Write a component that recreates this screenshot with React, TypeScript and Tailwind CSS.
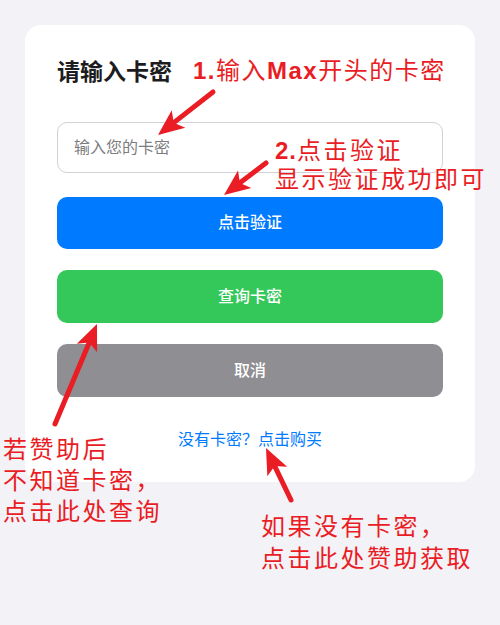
import React from "react";

const uiFont = { fontFamily: '"Liberation Sans", "Noto Sans CJK SC", sans-serif' };

function Arrow({ x1, y1, x2, y2 }: { x1: number; y1: number; x2: number; y2: number }) {
  const dx = x2 - x1;
  const dy = y2 - y1;
  const len = Math.hypot(dx, dy);
  const ux = dx / len;
  const uy = dy / len;
  const headLen = 26;
  const headW = 11;
  const bx = x2 - ux * headLen;
  const by = y2 - uy * headLen;
  const pts = [
    [x2, y2],
    [bx - uy * headW, by + ux * headW],
    [x2 - ux * (headLen - 6), y2 - uy * (headLen - 6)],
    [bx + uy * headW, by - ux * headW],
  ]
    .map((p) => p.join(","))
    .join(" ");
  return (
    <g>
      <line
        x1={x1}
        y1={y1}
        x2={x2 - ux * 14}
        y2={y2 - uy * 14}
        stroke="#ea1c24"
        strokeWidth={5}
        strokeLinecap="round"
      />
      <polygon points={pts} fill="#ea1c24" />
    </g>
  );
}

export default function App() {
  return (
    <div className="relative min-h-[625px] bg-[#f2f2f7] p-[25px]" style={uiFont}>
      <div className="rounded-2xl bg-white px-8 pt-8 pb-[30px]">
        <h1 className="text-[23px] leading-[30px] font-bold text-[#1c1c1e]">请输入卡密</h1>

        <input
          className="mt-[35px] block h-[51px] w-full rounded-[10px] border border-[#d1d1d6] px-4 text-base outline-none placeholder:text-[#7c7c80]"
          placeholder="输入您的卡密"
        />

        <div className="mt-6 flex flex-col gap-[21px]">
          <button className="h-[52px] rounded-[10px] bg-[#007aff] text-base font-medium text-white">
            点击验证
          </button>
          <button className="h-[53px] rounded-[10px] bg-[#34c759] text-base font-medium text-white">
            查询卡密
          </button>
          <button className="h-[53px] rounded-[10px] bg-[#8e8e93] text-base font-medium text-white">
            取消
          </button>
        </div>

        <p className="mt-[31px] text-center text-base leading-6 text-[#007aff]">没有卡密？点击购买</p>
      </div>

      {/* annotations */}
      <div className="pointer-events-none absolute inset-0 text-[24px] text-[#ea1c24]">
        <div className="absolute left-[193px] top-[56px] leading-[30px] tracking-[1.5px] whitespace-nowrap">
          <b>1.</b>输入<b>Max</b>开头的卡密
        </div>
        <div className="absolute left-[275px] top-[136px] leading-[29px] tracking-[2.5px] whitespace-nowrap">
          <b className="tracking-[1px]">2.</b>点击验证
          <br />
          显示验证成功即可
        </div>
        <div className="absolute left-[3px] top-[434px] leading-[31px] tracking-[2.5px] whitespace-nowrap">
          若赞助后
          <br />
          不知道卡密，
          <br />
          点击此处查询
        </div>
        <div className="absolute left-[261px] top-[511px] leading-[32px] tracking-[2.5px] whitespace-nowrap">
          如果没有卡密，
          <br />
          点击此处赞助获取
        </div>
        <svg className="absolute inset-0" width="500" height="625" viewBox="0 0 500 625">
          <Arrow x1={213} y1={92} x2={158} y2={135} />
          <Arrow x1={266} y1={163} x2={224} y2={195} />
          <Arrow x1={55} y1={424} x2={97} y2={324} />
          <Arrow x1={291} y1={500} x2={266} y2={448} />
        </svg>
      </div>
    </div>
  );
}
